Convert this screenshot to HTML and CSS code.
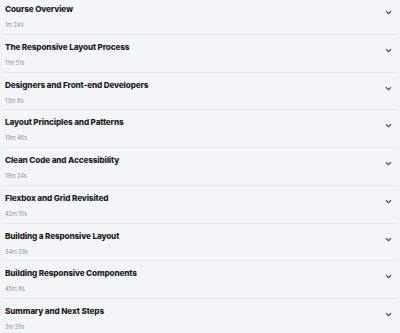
FILE: index.html
```html
<!DOCTYPE html>
<html lang="en">
<head>
    <meta charset="UTF-8">
    <meta name="viewport" content="width=device-width, initial-scale=1.0">
    <title>Course Content</title>
    <link rel="stylesheet" href="styles.css">
</head>
<body>
    <ul class="modules">
        <li class="module">
            <div class="module-info">
                <h3 class="module-title">Course Overview</h3>
                <span class="module-time">1m 24s</span>
            </div>
            <svg class="chevron" viewBox="0 0 8 6"><path d="M1 1.5 L4 4.5 L7 1.5"/></svg>
        </li>
        <li class="module">
            <div class="module-info">
                <h3 class="module-title">The Responsive Layout Process</h3>
                <span class="module-time">11m 51s</span>
            </div>
            <svg class="chevron" viewBox="0 0 8 6"><path d="M1 1.5 L4 4.5 L7 1.5"/></svg>
        </li>
        <li class="module">
            <div class="module-info">
                <h3 class="module-title">Designers and Front-end Developers</h3>
                <span class="module-time">13m 8s</span>
            </div>
            <svg class="chevron" viewBox="0 0 8 6"><path d="M1 1.5 L4 4.5 L7 1.5"/></svg>
        </li>
        <li class="module">
            <div class="module-info">
                <h3 class="module-title">Layout Principles and Patterns</h3>
                <span class="module-time">19m 46s</span>
            </div>
            <svg class="chevron" viewBox="0 0 8 6"><path d="M1 1.5 L4 4.5 L7 1.5"/></svg>
        </li>
        <li class="module">
            <div class="module-info">
                <h3 class="module-title">Clean Code and Accessibility</h3>
                <span class="module-time">19m 24s</span>
            </div>
            <svg class="chevron" viewBox="0 0 8 6"><path d="M1 1.5 L4 4.5 L7 1.5"/></svg>
        </li>
        <li class="module">
            <div class="module-info">
                <h3 class="module-title">Flexbox and Grid Revisited</h3>
                <span class="module-time">42m 10s</span>
            </div>
            <svg class="chevron" viewBox="0 0 8 6"><path d="M1 1.5 L4 4.5 L7 1.5"/></svg>
        </li>
        <li class="module">
            <div class="module-info">
                <h3 class="module-title">Building a Responsive Layout</h3>
                <span class="module-time">34m 28s</span>
            </div>
            <svg class="chevron" viewBox="0 0 8 6"><path d="M1 1.5 L4 4.5 L7 1.5"/></svg>
        </li>
        <li class="module">
            <div class="module-info">
                <h3 class="module-title">Building Responsive Components</h3>
                <span class="module-time">45m 8s</span>
            </div>
            <svg class="chevron" viewBox="0 0 8 6"><path d="M1 1.5 L4 4.5 L7 1.5"/></svg>
        </li>
        <li class="module">
            <div class="module-info">
                <h3 class="module-title">Summary and Next Steps</h3>
                <span class="module-time">3m 29s</span>
            </div>
            <svg class="chevron" viewBox="0 0 8 6"><path d="M1 1.5 L4 4.5 L7 1.5"/></svg>
        </li>
    </ul>
</body>
</html>
```

FILE: styles.css
```css
body {
    margin: 0;
    background: #f3f6f9;
    font-family: Inter, "Noto Sans", sans-serif;
    color: #1d1e24;
}
.modules {
    list-style: none;
    margin: -3px 0 0;
    padding: 0 5px;
}
.module {
    display: flex;
    justify-content: space-between;
    align-items: flex-start;
    height: 37.75px;
    box-sizing: border-box;
    border-bottom: 1px solid #e2e6eb;
}
.module-info {
    padding-top: 6px;
}
.module-title {
    margin: 0;
    font-size: 8.2px;
    font-weight: 800;
    letter-spacing: -0.15px;
    line-height: 12px;
}
.module-time {
    display: block;
    margin-top: 7px;
    font-size: 5.5px;
    line-height: 7px;
    color: #8b909a;
}
.chevron {
    width: 7px;
    height: 5px;
    margin-top: 13px;
    margin-right: 3px;
    fill: none;
    stroke: #4a4d55;
    stroke-width: 1.4;
}
```
